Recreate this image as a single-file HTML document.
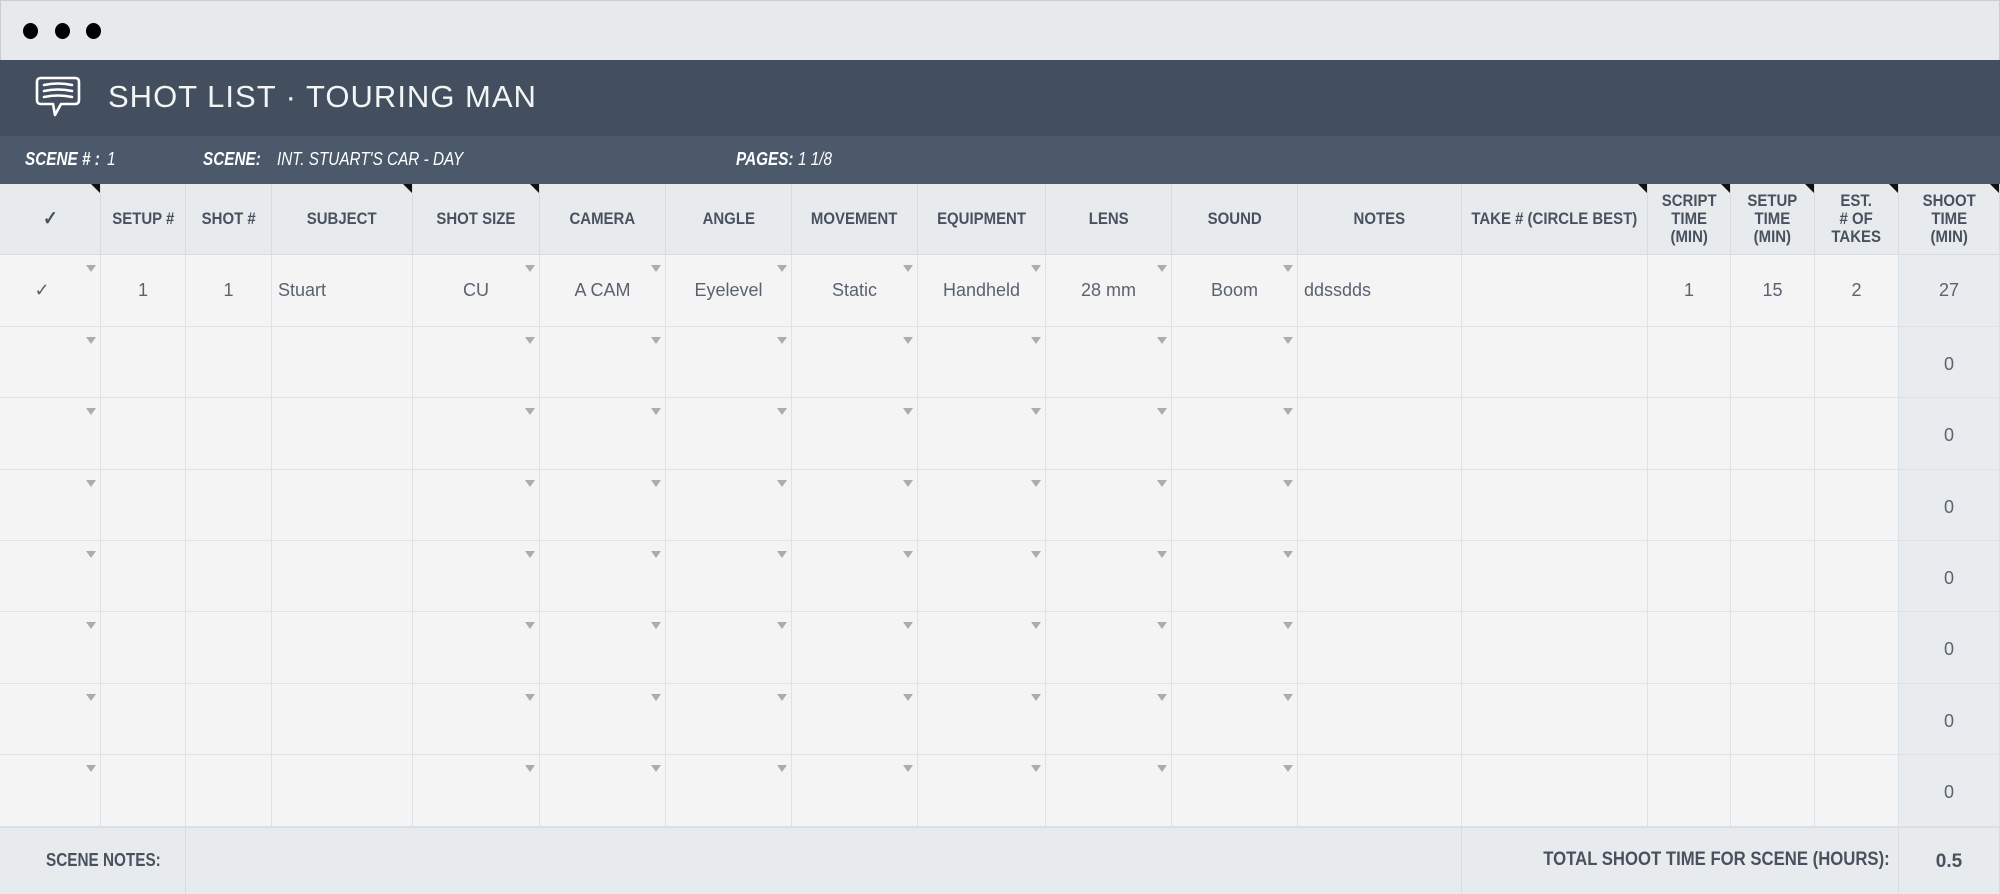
<!DOCTYPE html>
<html><head><meta charset="utf-8"><style>
*{margin:0;padding:0;box-sizing:border-box}
body{width:2000px;height:894px;overflow:hidden;background:#e6eaed;font-family:"Liberation Sans",sans-serif;color:#4a5566;position:relative}
.tb{position:absolute;left:0;top:0;width:2000px;height:60px;background:#e6eaed;border:1px solid #c9cdd1;border-bottom:none}
.dot{position:absolute;top:22px;width:15px;height:16px;border-radius:50%;background:#000}
.hd{position:absolute;left:0;top:60px;width:2000px;height:76px;background:#434f5e}
.hd .t{position:absolute;left:108px;top:19px;font-size:31px;color:#f2f4f6;letter-spacing:1px;font-weight:300}
.sb{position:absolute;left:0;top:136px;width:2000px;height:48px;background:#4b596b;color:#fff;font-size:18px;font-style:italic}
.sb span{position:absolute;top:13px;transform:scaleX(.85);transform-origin:left}
.sb b{font-weight:bold}
.c{position:absolute;border-right:1px solid #dfe2e5;border-bottom:1px solid #dfe2e5;display:flex;align-items:center;justify-content:center;text-align:center}
.h{background:#e8ebee;font-weight:bold;font-size:17px;line-height:18px;color:#48525f;border-color:#d8dce0}
.h span{transform:scaleX(.88);white-space:nowrap}
.r{background:#f4f4f4;font-size:18px;color:#5a6270}
.l{background:#e9ecef}
.tri{position:absolute;right:4px;top:10px;width:0;height:0;border-left:5px solid transparent;border-right:5px solid transparent;border-top:7px solid #a8adb3}
.flag{position:absolute;right:0;top:0;width:0;height:0;border-left:9px solid transparent;border-top:9px solid #111}
.ft{position:absolute;background:#e8ebee;font-weight:bold;font-size:18px;color:#48525f;border-right:1px solid #d8dce0;border-top:1px solid #d8dce0}
</style></head><body>
<div class="tb"><div class="dot" style="left:22px"></div><div class="dot" style="left:54px"></div><div class="dot" style="left:85px"></div></div>
<div class="hd">
<svg style="position:absolute;left:35px;top:15px" width="46" height="44" viewBox="0 0 46 44"><path d="M6 3 H40 Q44 3 44 7 V25 Q44 29 40 29 H26 L20 40 L18 29 H6 Q2 29 2 25 V7 Q2 3 6 3Z" fill="none" stroke="#fff" stroke-width="2.6" stroke-linejoin="round"/><path d="M9 10 Q23 7 37 10 M9 16 Q23 13 37 16 M9 22 Q23 19 37 22" fill="none" stroke="#fff" stroke-width="2.6" stroke-linecap="round"/></svg>
<div class="t">SHOT LIST · TOURING MAN</div></div>
<div class="sb">
<span style="left:25px"><b>SCENE # :</b></span><span style="left:107px">1</span>
<span style="left:203px"><b>SCENE:</b></span><span style="left:277px">INT. STUART'S CAR - DAY</span>
<span style="left:736px"><b>PAGES:</b></span><span style="left:798px">1 1/8</span>
</div>
<div id="g"></div>
<script>
var X=[0,101,186,272,413,540,666,792,918,1046,1172,1298,1462,1648,1731,1815,1899,2000];
var H=["✓","SETUP #","SHOT #","SUBJECT","SHOT SIZE","CAMERA","ANGLE","MOVEMENT","EQUIPMENT","LENS","SOUND","NOTES","TAKE # (CIRCLE BEST)","SCRIPT<br>TIME<br>(MIN)","SETUP<br>TIME<br>(MIN)","EST.<br># OF<br>TAKES","SHOOT<br>TIME<br>(MIN)"];
var flags=[0,3,4,12,13,14,15,16];
var R1=["✓","1","1","Stuart","CU","A CAM","Eyelevel","Static","Handheld","28 mm","Boom","ddssdds","","1","15","2","27"];
var dd=[0,4,5,6,7,8,9,10];
var Y=[255,327,398,470,541,612,684,755,827];
var s="";
for(var i=0;i<17;i++){
 s+='<div class="c h" style="left:'+X[i]+'px;top:184px;width:'+(X[i+1]-X[i])+'px;height:71px;'+(i==0?'font-size:20px;':'')+'"><span>'+H[i]+'</span>'+(flags.indexOf(i)>=0?'<div class="flag"></div>':'')+'</div>';
}
for(var r=0;r<8;r++){
 for(var i=0;i<17;i++){
  var t=r==0?R1[i]:(i==16?"0":"");
  var st="left:"+X[i]+"px;top:"+Y[r]+"px;width:"+(X[i+1]-X[i])+"px;height:"+(Y[r+1]-Y[r])+"px;";
  if(i==3||i==11){st+="justify-content:flex-start;padding-left:6px;";}
  if(i==0&&r==0)st+="padding-right:16px;";
  if(i==16&&r>0)st+="padding-top:4px;";
  s+='<div class="c r'+(i==16?' l':'')+'" style="'+st+'">'+t+(dd.indexOf(i)>=0?'<div class="tri"></div>':'')+'</div>';
 }
}
s+='<div class="ft" style="left:0;top:827px;width:186px;height:67px;padding:22px 0 0 46px"><span style="display:inline-block;transform:scaleX(.85);transform-origin:left;white-space:nowrap">SCENE NOTES:</span></div>';
s+='<div class="ft" style="left:186px;top:827px;width:1276px;height:67px"></div>';
s+='<div class="ft" style="left:1462px;top:827px;width:437px;height:67px;text-align:right;padding:21px 8px 0 0;font-size:19px"><span style="display:inline-block;transform:scaleX(.88);transform-origin:right;white-space:nowrap">TOTAL SHOOT TIME FOR SCENE (HOURS):</span></div>';
s+='<div class="ft" style="left:1899px;top:827px;width:101px;height:67px;text-align:center;padding-top:23px;font-size:19px">0.5</div>';
document.getElementById("g").innerHTML=s;
</script>
</body></html>
